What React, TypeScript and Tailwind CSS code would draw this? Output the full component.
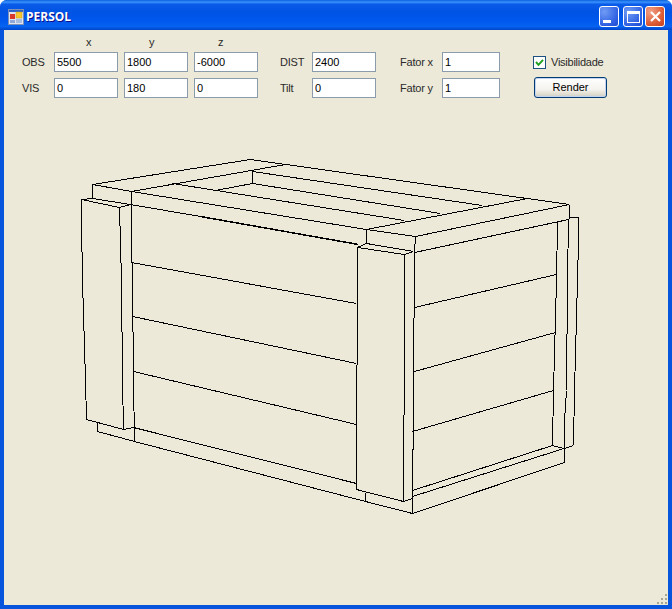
import React from "react";

const segments: number[][] = [
  // top rim
  [250,159,569,204],[92,184,250,159],[92,184,131,191],[131,191,285,164],[92,184,92,198],
  [131,191,366,229],[366,229,415,236],[366,229,527,198],[415,236,569,204],[569,204,569,218],
  [415,236,414,251],[366,229,366,243],[414,252,568,219],
  // inner boards
  [252,171,482,205],[252,183,440,213],[172,183,404,220],[215,190,252,183],[252,171,252,183],
  // front right post
  [357,247,366,243],[366,243,413,251],[357,247,404,254],[404,254,413,251],
  [357,247,356,489],[404,254,404,390,403,440,403,501],[414,251,413,390,412,513],
  [356,489,403,501],[403,501,412,498],
  // bottom front
  [133,427,356,483],[134,441,365,501],[365,501,412,513],[365,492,365,501],
  // bottom right
  [412,513,564,462],[412,490,552,445],[412,496,573,445],[552,445,563,448],
  // right posts
  [568,219,567,280,566,390,564,420,564,462],[557,222,556,280,553,390,552,445],
  [578,217,578,240,577,280,574,390,573,445],[569,217,578,217],
  // right planks
  [414,307,556,274],[414,371,555,332],[412,431,553,390],
  // left post
  [81,199,92,198],[92,198,130,204],[81,199,119,207],[119,207,130,204],
  [81,199,81,222,82,280,85,380,86,419],[119,207,121,280,122,380,123,429],
  [131,191,131,242,132,280,133,380,134,441],
  [86,419,123,429],[123,429,133,427],[97,431,134,441],[97,422,97,431],
  // front planks
  [131,262,356,303],[132,316,356,363],[133,371,356,424],
];

function Field({ value }: { value: string }) {
  return (
    <input
      readOnly
      value={value}
      className="h-[20px] w-full border border-[#8a9cab] bg-white pl-[2px] text-[11px] text-black outline-none"
    />
  );
}

function Label({ children }: { children: React.ReactNode }) {
  return (
    <div className="flex items-center text-[11px] leading-none tracking-[-0.2px] text-[#2a2a2a]">
      {children}
    </div>
  );
}

function Axis({ children, className }: { children: React.ReactNode; className: string }) {
  return <div className={`pt-[3px] text-[11px] leading-none text-[#2a2a2a] ${className}`}>{children}</div>;
}

const capBtn =
  "flex h-[21px] w-[20px] items-center justify-center rounded-[3px] border border-white";

export default function App() {
  return (
    <div className="flex h-[609px] w-[672px] flex-col overflow-hidden rounded-t-[7px] bg-[#0855dd] font-['Liberation_Sans',Arial,sans-serif]">
      {/* Title bar */}
      <div className="flex h-[30px] shrink-0 items-center bg-[linear-gradient(180deg,#0a5fd8_0%,#3a93ff_7%,#0a5be8_14%,#0053e4_40%,#0058ee_70%,#0663f0_88%,#0045c8_100%)] pl-[8px] pr-[7px] pt-[3px]">
        <svg width="16" height="16" viewBox="0 0 16 16" className="shrink-0">
          <rect x="0.5" y="0.5" width="15" height="15" fill="#dfe6f2" stroke="#7d8fb3" />
          <rect x="1" y="1" width="14" height="2" fill="#2a62c8" />
          <rect x="2" y="5" width="5" height="5" fill="#d8392b" />
          <rect x="8" y="3" width="6" height="6" fill="#f6c830" stroke="#c89a10" strokeWidth="0.5" />
          <rect x="2" y="11" width="5" height="3" fill="#8fa8d8" />
          <rect x="8" y="10" width="6" height="4" fill="#a8bce0" />
        </svg>
        <div className="ml-[2px] font-['Open_Sans',sans-serif] text-[12px] font-bold leading-none text-white [text-shadow:1px_1px_#0f1089]">
          PERSOL
        </div>
        <div className="ml-auto flex">
          <div className={`${capBtn} items-end bg-[radial-gradient(circle_at_25%_25%,#6f9bf5,#2a5be0_75%,#2050c8)]`}>
            <div className="mb-[3px] mr-[4px] h-[3px] w-[8px] self-end bg-white" />
          </div>
          <div className={`${capBtn} ml-[4px] bg-[radial-gradient(circle_at_25%_25%,#6f9bf5,#2a5be0_75%,#2050c8)]`}>
            <div className="h-[12px] w-[13px] border border-t-[3px] border-white" />
          </div>
          <div className={`${capBtn} ml-[2px] bg-[radial-gradient(circle_at_25%_25%,#f0a088,#dc5a32_65%,#c04020)]`}>
            <svg width="13" height="13" viewBox="0 0 13 13">
              <path d="M2 2 L11 11 M11 2 L2 11" stroke="#ffffff" strokeWidth="2.2" />
            </svg>
          </div>
        </div>
      </div>

      {/* Client area */}
      <div className="mx-[4px] mb-[4px] flex min-h-0 flex-1 flex-col bg-[#ece9d8]">
        <div className="flex h-[76px] shrink-0 pl-[18px] pt-[4px]">
          <div className="grid grid-cols-[26px_64px_64px_64px] grid-rows-[12px_20px_20px] gap-x-[6px] gap-y-[6px]">
            <div />
            <Axis className="pl-[32px]">x</Axis>
            <Axis className="pl-[25px]">y</Axis>
            <Axis className="pl-[24px]">z</Axis>
            <Label>OBS</Label>
            <Field value="5500" />
            <Field value="1800" />
            <Field value="-6000" />
            <Label>VIS</Label>
            <Field value="0" />
            <Field value="180" />
            <Field value="0" />
          </div>
          <div className="ml-[22px] mt-[18px] grid grid-cols-[26px_64px] grid-rows-[20px_20px] gap-x-[6px] gap-y-[6px]">
            <Label>DIST</Label>
            <Field value="2400" />
            <Label>Tilt</Label>
            <Field value="0" />
          </div>
          <div className="ml-[24px] mt-[18px] grid grid-cols-[42px_58px] grid-rows-[20px_20px] gap-y-[6px]">
            <Label>Fator x</Label>
            <Field value="1" />
            <Label>Fator y</Label>
            <Field value="1" />
          </div>
          <div className="ml-[33px] mt-[18px] flex flex-col">
            <div className="flex h-[20px] items-center">
              <div className="flex h-[13px] w-[13px] items-center justify-center border border-[#1c5180] bg-white">
                <svg width="11" height="11" viewBox="0 0 11 11">
                  <path d="M2 5 L4.5 7.8 L9 2.8" fill="none" stroke="#21a121" strokeWidth="2" />
                </svg>
              </div>
              <div className="ml-[5px] text-[11px] leading-none tracking-[-0.25px] text-[#2a2a2a]">Visibilidade</div>
            </div>
            <div className="ml-[1px] mt-[5px] flex h-[21px] w-[73px] items-center justify-center rounded-[3px] border border-[#003c74] bg-[linear-gradient(180deg,#ffffff_0%,#f4f3ee_60%,#dcd8ca_90%,#b8c8e8_100%)] text-[11px] leading-none text-black shadow-[inset_0_0_0_1px_#c4d4f0]">
              Render
            </div>
          </div>
        </div>

        {/* Drawing */}
        <svg
          className="block min-h-0 flex-1"
          width="664"
          height="499"
          viewBox="4 106 664 499"
          fill="none"
          stroke="#000000"
          strokeWidth="1"
          strokeLinejoin="round"
          shapeRendering="crispEdges"
        >
          <g transform="translate(0.5 0.5)">
            {segments.map((s, i) => (
              <polyline key={i} points={s.join(",")} />
            ))}
            <polyline points="130,204 200,216" />
            <polyline points="200,216 358,244" strokeWidth="1.5" />
          </g>
          <g fill="#a8a590" stroke="none">
            <rect x="665" y="594" width="2" height="2" />
            <rect x="661" y="598" width="2" height="2" />
            <rect x="665" y="598" width="2" height="2" />
            <rect x="657" y="602" width="2" height="2" />
            <rect x="661" y="602" width="2" height="2" />
            <rect x="665" y="602" width="2" height="2" />
          </g>
        </svg>
      </div>
    </div>
  );
}
